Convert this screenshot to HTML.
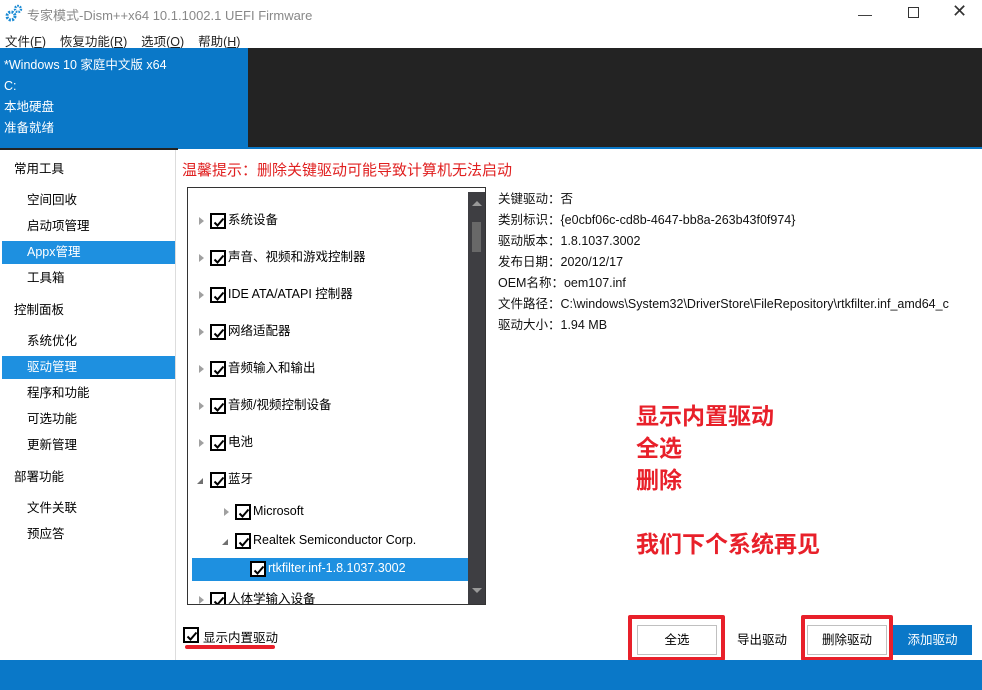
<!DOCTYPE html><html><head><meta charset="utf-8"><style>
*{margin:0;padding:0;box-sizing:border-box}
body{width:982px;height:690px;position:relative;overflow:hidden;background:#fff;font-family:"Liberation Sans","Noto Sans CJK SC",sans-serif;font-size:12px;color:#000}
.a{position:absolute;white-space:nowrap}
.cb{position:absolute;width:16px;height:16px;border:2px solid #000;background:#fff}
.cb svg{position:absolute;left:1px;top:1px}
.tri{position:absolute;width:0;height:0;border-left:5px solid #a0a0a0;border-top:4px solid transparent;border-bottom:4px solid transparent}
.tri2{position:absolute;width:0;height:0;border-right:6px solid #707070;border-top:6px solid transparent}
.side{font-size:12.5px;line-height:16px}
.lbl{position:absolute;white-space:nowrap;font-size:12.5px;line-height:16px;height:16px}
.btn{position:absolute;height:30px;text-align:center;line-height:28px;font-size:12.5px;border:1px solid #c0c0c0;background:#fff}
.red{position:absolute;border:4px solid #e8202a;border-radius:2px}
.info{font-size:12.5px;color:#111}
</style></head><body>
<svg class="a" style="left:5px;top:4px" width="18" height="18" viewBox="0 0 18 18"><circle cx="6" cy="12" r="4" fill="none" stroke="#1a8ad4" stroke-width="3" stroke-dasharray="2 1.2"/><circle cx="13" cy="5" r="3" fill="none" stroke="#1a8ad4" stroke-width="2.4" stroke-dasharray="1.6 1"/></svg>
<div class="a" style="left:27px;top:5px;font-size:13px;color:#888">专家模式-Dism++x64 10.1.1002.1 UEFI Firmware</div>
<div class="a" style="left:858px;top:6px;font-size:14px;color:#333">—</div>
<div class="a" style="left:908px;top:7px;width:11px;height:11px;border:1px solid #333"></div>
<div class="a" style="left:952px;top:1px;font-size:18px;color:#333">✕</div>
<div class="a" style="left:5px;top:31px;font-size:12.5px;color:#222">文件(<u>F</u>)&nbsp;&nbsp;&nbsp;&nbsp;恢复功能(<u>R</u>)&nbsp;&nbsp;&nbsp;&nbsp;选项(<u>O</u>)&nbsp;&nbsp;&nbsp;&nbsp;帮助(<u>H</u>)</div>
<div class="a" style="left:0;top:48px;width:982px;height:101px;background:#0a78c8"></div>
<div class="a" style="left:248px;top:48px;width:734px;height:99px;background:#232323"></div>
<div class="a" style="left:0;top:148px;width:178px;height:2px;background:#232323"></div>
<div class="a" style="left:4px;top:55px;color:#fff;font-size:12.5px;line-height:21px">*Windows 10 家庭中文版 x64<br>C:<br>本地硬盘<br>准备就绪</div>
<div class="a" style="left:0;top:150px;width:176px;height:510px;background:#fff;border-right:1px solid #ddd"></div>
<div class="a side" style="left:14px;top:161px">常用工具</div>
<div class="a side" style="left:27px;top:192px">空间回收</div>
<div class="a side" style="left:27px;top:218px">启动项管理</div>
<div class="a" style="left:2px;top:241px;width:173px;height:23px;background:#1e90e0"></div>
<div class="a side" style="left:27px;top:244px;color:#fff">Appx管理</div>
<div class="a side" style="left:27px;top:270px">工具箱</div>
<div class="a side" style="left:14px;top:302px">控制面板</div>
<div class="a side" style="left:27px;top:333px">系统优化</div>
<div class="a" style="left:2px;top:356px;width:173px;height:23px;background:#1e90e0"></div>
<div class="a side" style="left:27px;top:359px;color:#fff">驱动管理</div>
<div class="a side" style="left:27px;top:385px">程序和功能</div>
<div class="a side" style="left:27px;top:411px">可选功能</div>
<div class="a side" style="left:27px;top:437px">更新管理</div>
<div class="a side" style="left:14px;top:469px">部署功能</div>
<div class="a side" style="left:27px;top:500px">文件关联</div>
<div class="a side" style="left:27px;top:526px">预应答</div>
<div class="a" style="left:182px;top:159px;color:#e02020;font-size:15px">温馨提示：删除关键驱动可能导致计算机无法启动</div>
<div class="a" id="box" style="left:187px;top:187px;width:299px;height:418px;border:1px solid #333;overflow:hidden">
 <div class="a" style="left:4px;top:370px;width:276px;height:23px;background:#1e90e0"></div>
 <div id="tree"></div>
 <div class="a" style="left:280px;top:4px;width:17px;height:412px;background:#3e3e42"></div>
 <div class="a" style="left:284px;top:13px;width:0;height:0;border-left:5px solid transparent;border-right:5px solid transparent;border-bottom:5px solid #999"></div>
 <div class="a" style="left:284px;top:34px;width:9px;height:30px;background:#686868"></div>
 <div class="a" style="left:284px;top:400px;width:0;height:0;border-left:5px solid transparent;border-right:5px solid transparent;border-top:5px solid #999"></div>
</div>
<script>
var rows=[[221,'系统设备',210,0],[258,'声音、视频和游戏控制器',210,0],[295,'IDE ATA/ATAPI 控制器',210,0],[332,'网络适配器',210,0],[369,'音频输入和输出',210,0],[406,'音频/视频控制设备',210,0],[443,'电池',210,0],[480,'蓝牙',210,1],[512,'Microsoft',235,0],[541,'Realtek Semiconductor Corp.',235,1],[569,'rtkfilter.inf-1.8.1037.3002',250,2],[600,'人体学输入设备',210,0]];
var h='',chk='<svg width="12" height="12" viewBox="0 0 12 12"><path d="M1.5 6.5 L4.5 9.5 L10.5 2.5" fill="none" stroke="#000" stroke-width="2"/></svg>';
rows.forEach(function(r){var y=r[0]-188,x=r[2]-188;
if(r[3]==0)h+='<div class="tri" style="left:'+(x-11)+'px;top:'+(y-4)+'px"></div>';
else if(r[3]==1)h+='<div class="tri2" style="left:'+(x-13)+'px;top:'+(y-2)+'px"></div>';
h+='<div class="cb" style="left:'+x+'px;top:'+(y-8)+'px">'+chk+'</div>';
h+='<div class="lbl" style="left:'+(x+18)+'px;top:'+(y-9)+'px;'+(r[3]==2?'color:#fff':'')+'">'+r[1]+'</div>';});
document.getElementById('tree').innerHTML=h;
</script>
<div class="a info" style="left:498px;top:189px;line-height:21px;width:484px;overflow:hidden">关键驱动：否<br>类别标识：{e0cbf06c-cd8b-4647-bb8a-263b43f0f974}<br>驱动版本：1.8.1037.3002<br>发布日期：2020/12/17<br>OEM名称：oem107.inf<br>文件路径：C:\windows\System32\DriverStore\FileRepository\rtkfilter.inf_amd64_c<br>驱动大小：1.94 MB</div>
<div class="a" style="left:636px;top:400px;color:#e8202a;font-size:23px;font-weight:bold;line-height:32px">显示内置驱动<br>全选<br>删除<br><br>我们下个系统再见</div>
<div class="cb" style="left:183px;top:627px">CHK</div>
<div class="a" style="left:203px;top:627px;font-size:12.5px">显示内置驱动</div>
<div class="a" style="left:185px;top:645px;width:90px;height:4px;background:#e8202a;border-radius:2px"></div>
<div class="btn" style="left:637px;top:625px;width:80px">全选</div>
<div class="btn" style="left:723px;top:625px;width:78px;border-color:#fff">导出驱动</div>
<div class="btn" style="left:807px;top:625px;width:80px">删除驱动</div>
<div class="btn" style="left:893px;top:625px;width:79px;background:#0a78c8;color:#fff;border-color:#0a78c8">添加驱动</div>
<div class="red" style="left:628px;top:615px;width:97px;height:46px"></div>
<div class="red" style="left:801px;top:615px;width:92px;height:46px"></div>
<div class="a" style="left:0;top:660px;width:982px;height:30px;background:#0a78c8"></div>
<script>document.querySelectorAll('.cb').forEach(function(e){if(e.textContent=='CHK')e.innerHTML=chk;});</script>
</body></html>
